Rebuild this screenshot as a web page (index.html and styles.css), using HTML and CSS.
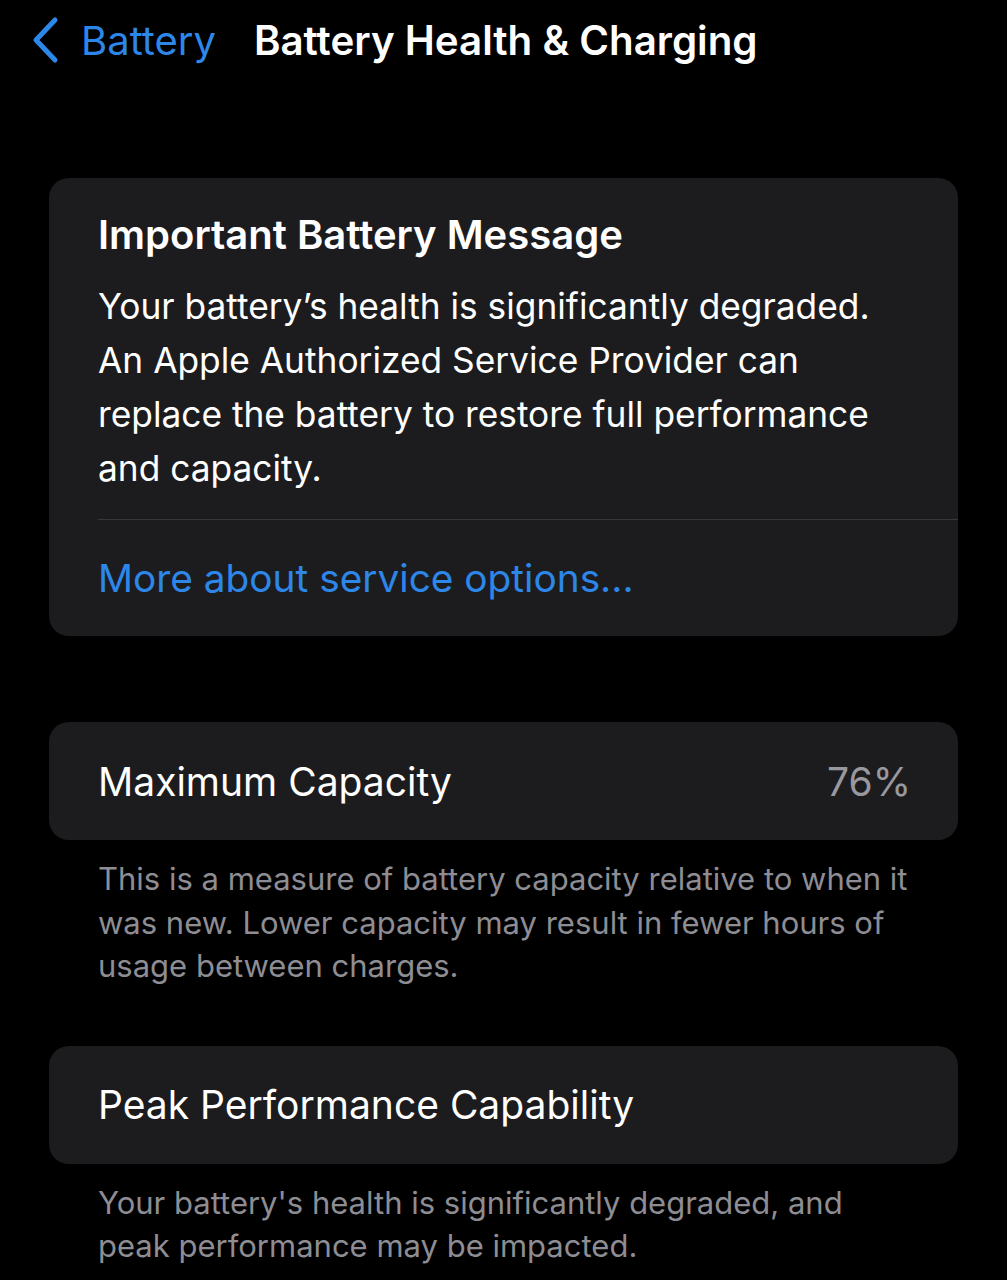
FILE: index.html
```html
<!DOCTYPE html>
<html lang="en">
<head>
    <meta charset="UTF-8">
    <meta name="viewport" content="width=device-width, initial-scale=1.0">
    <title>Battery Health &amp; Charging</title>
    <link rel="stylesheet" href="styles.css">
</head>
<body>
    <header class="nav">
        <a class="back" href="#">
            <svg class="chevron" viewBox="0 0 30 48" width="30" height="48">
                <path d="M25 4 L6 24 L25 44" fill="none" stroke="currentColor" stroke-width="5" stroke-linecap="round" stroke-linejoin="round"/>
            </svg>
            <span>Battery</span>
        </a>
        <h1 class="nav-title">Battery Health &amp; Charging</h1>
    </header>

    <main class="content">
        <section class="card message">
            <h2 class="message-title">Important Battery Message</h2>
            <p class="message-text">Your battery’s health is significantly degraded. An Apple Authorized Service Provider can replace the battery to restore full performance and capacity.</p>
            <div class="separator"></div>
            <a class="link" href="#">More about service options...</a>
        </section>

        <section class="group">
            <div class="card row">
                <span class="row-label">Maximum Capacity</span>
                <span class="row-value">76%</span>
            </div>
            <p class="footnote">This is a measure of battery capacity relative to when it was new. Lower capacity may result in fewer hours of usage between charges.</p>
        </section>

        <section class="group">
            <div class="card row">
                <span class="row-label">Peak Performance Capability</span>
            </div>
            <p class="footnote">Your battery's health is significantly degraded, and peak performance may be impacted.</p>
        </section>
    </main>
</body>
</html>
```

FILE: styles.css
```css
* {
    margin: 0;
    padding: 0;
    box-sizing: border-box;
}

body {
    background-color: #000;
    color: #fff;
    font-family: Inter, "Noto Sans", sans-serif;
    min-height: 100vh;
}

a {
    text-decoration: none;
}

/* top navigation bar */
.nav {
    display: flex;
    align-items: center;
    height: 80px;
    padding-left: 30px;
}

.back {
    display: flex;
    align-items: center;
    gap: 21px;
    color: #2c87e9;
    font-size: 40px;
    margin-right: 38px;
}

.chevron {
    display: block;
}

.nav-title {
    font-size: 40.3px;
    font-weight: 600;
    color: #fff;
}

.content {
    padding: 98px 49px 0;
}

.card {
    background-color: #1c1c1e;
    border-radius: 20px;
}

/* battery message card */
.message {
    padding: 31px 0 0 49px;
}

.message-title {
    font-size: 40px;
    font-weight: 600;
    line-height: 52px;
    margin-bottom: 19px;
}

.message-text {
    font-size: 35.3px;
    line-height: 54px;
    padding-right: 60px;
}

.separator {
    height: 1px;
    background-color: #38383a;
    margin-top: 23px;
}

.link {
    display: block;
    color: #2c87e9;
    font-size: 38.8px;
    line-height: 116px;
}

/* setting rows */
.group {
    margin-top: 86px;
}

.group + .group {
    margin-top: 58px;
}

.row {
    display: flex;
    align-items: center;
    justify-content: space-between;
    height: 118px;
    padding: 0 47px 0 49px;
    font-size: 39px;
}

.row-value {
    color: #98989f;
}

.footnote {
    color: #8d8d93;
    font-size: 31px;
    line-height: 43.5px;
    padding: 17px 42px 0 49px;
}
```
